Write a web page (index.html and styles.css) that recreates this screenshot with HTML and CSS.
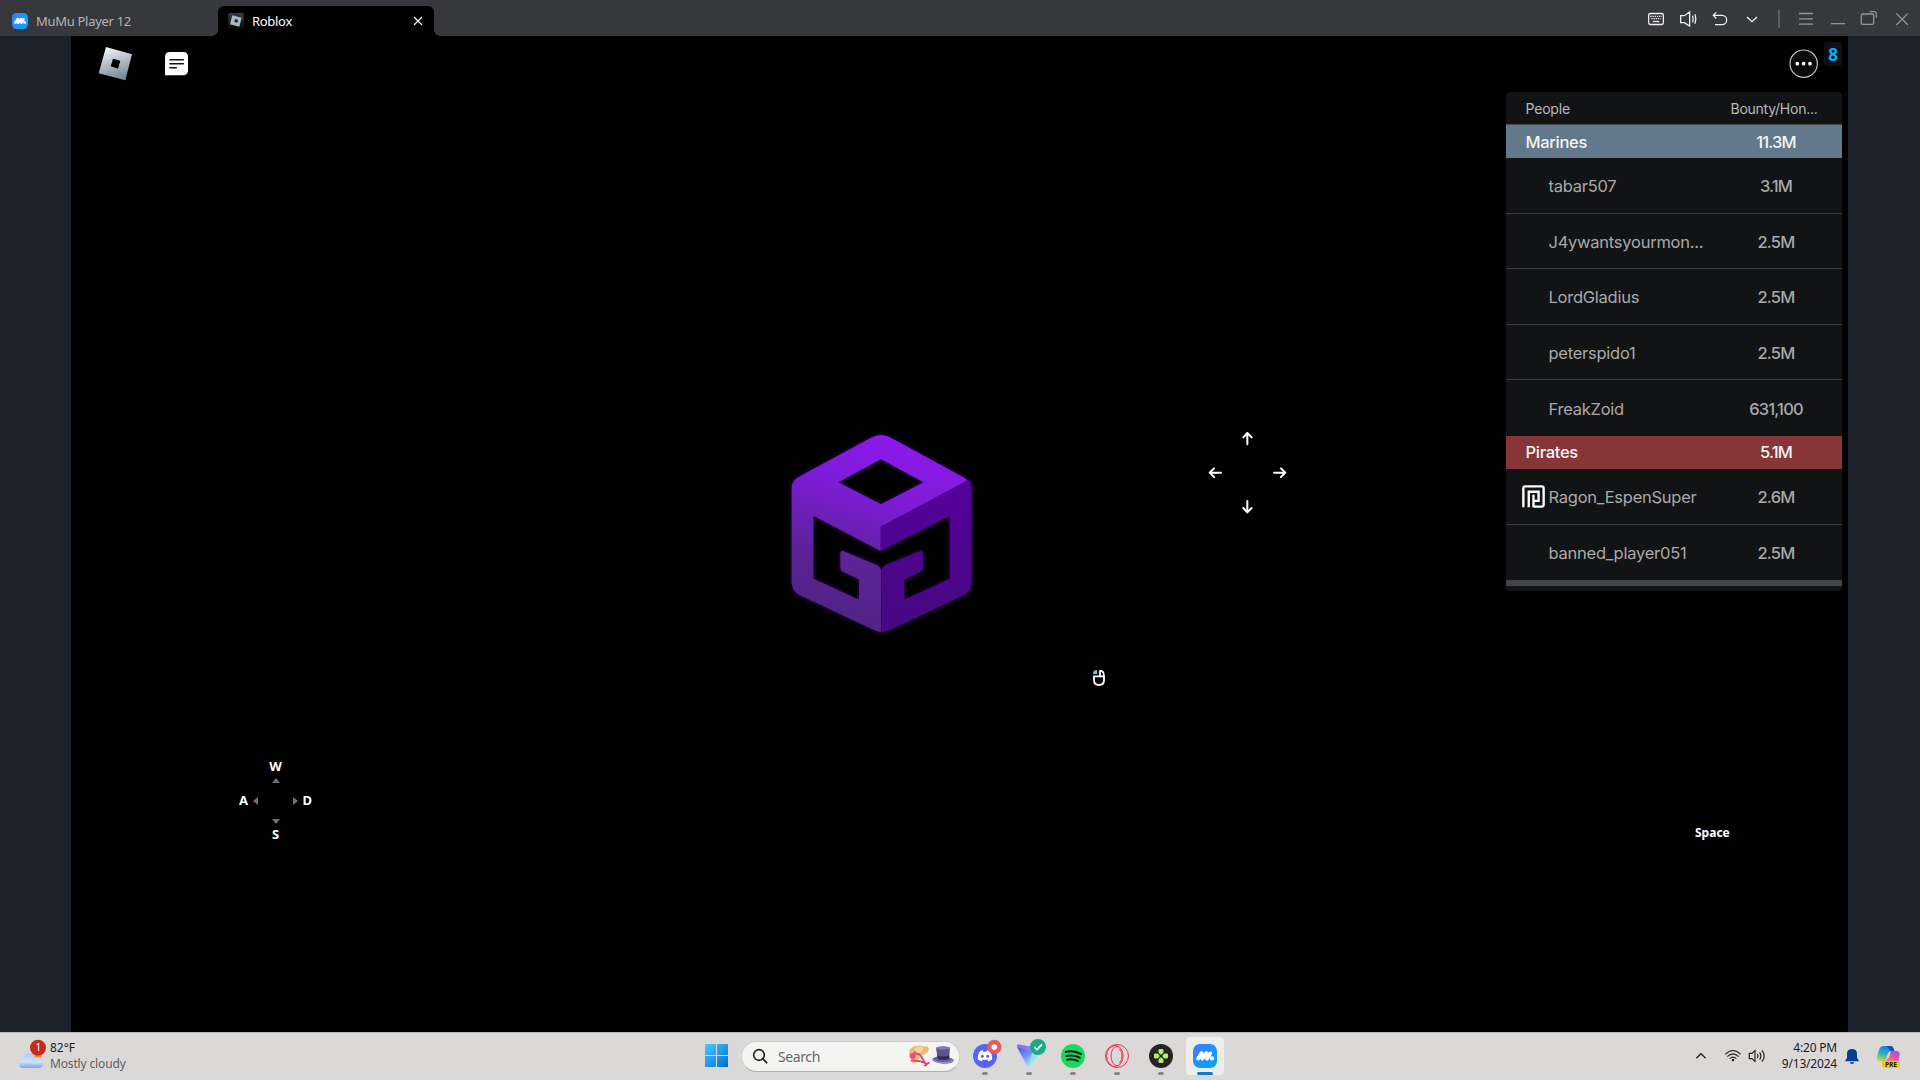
FILE: index.html
```html
<!DOCTYPE html>
<html lang="en">
<head>
    <meta charset="UTF-8">
    <meta name="viewport" content="width=device-width, initial-scale=1.0">
    <title>MuMu Player 12</title>
    <link rel="stylesheet" href="styles.css">
</head>
<body>
    <div class="titlebar">
        <div class="home-tab">
            <svg class="tab-icon" viewBox="0 0 72 72">
                <defs>
                    <linearGradient id="mumu" x1="0" y1="0" x2="1" y2="1">
                        <stop offset="0" stop-color="#3d7bff"/>
                        <stop offset="1" stop-color="#00a8ff"/>
                    </linearGradient>
                </defs>
                <rect width="72" height="72" rx="21" fill="url(#mumu)"/>
                <path d="M15 44 L26 27 M28 44 L40 27 M42 44 L52 28" stroke="#fff" stroke-width="11" stroke-linecap="round" fill="none"/>
                <circle cx="57" cy="43" r="6.5" fill="#fff"/>
            </svg>
            <span>MuMu Player 12</span>
        </div>
        <div class="active-tab">
            <svg class="tab-icon" viewBox="0 0 48 48">
                <defs>
                    <linearGradient id="tile" x1="0" y1="0" x2="0" y2="1">
                        <stop offset="0" stop-color="#343a46"/>
                        <stop offset="1" stop-color="#07080a"/>
                    </linearGradient>
                </defs>
                <rect width="48" height="48" rx="5" fill="url(#tile)"/>
                <path d="M13 7 L41 14 L34 41 L6 34 Z" fill="#aab6c6"/>
                <path d="M21 18 L30 20 L28 29 L19 27 Z" fill="#20252e"/>
            </svg>
            <span class="tab-name">Roblox</span>
            <svg class="tab-close" viewBox="0 0 30 30"><path d="M3 3 L27 27 M27 3 L3 27" stroke="#fff" stroke-width="3.4"/></svg>
        </div>
        <div class="window-tools">
            <svg viewBox="78 27 60 60">
                <rect x="86" y="40.500" width="44" height="33" rx="5"/>
                <path d="M91 49 H125 M94 56 H122" stroke-dasharray="4 2.500"/>
                <path d="M98 64.500 H118"/>
            </svg>
            <svg viewBox="174 27 60 60">
                <path d="M209 36 V78 L193 68 H182 V47 H193 Z M218 47 Q221 57 218 67 M225 43 Q230 57 225 71"/>
            </svg>
            <svg viewBox="270 27 60 60">
                <path d="M289 37 L280 46 L289 56 M281 46 H306 A14 14 0 0 1 306 74 H285"/>
            </svg>
            <svg viewBox="366 27 60 60"><path d="M381 51 L396 65 L411 51"/></svg>
            <span class="divider"></span>
            <svg class="dim" viewBox="528 27 60 60"><path d="M537 40.500 H579 M537 56.500 H579 M537 72.500 H579"/></svg>
            <svg class="dim" viewBox="624 27 60 60"><path d="M633 71 H675"/></svg>
            <svg class="dim" viewBox="720 27 60 60">
                <rect x="724" y="42" width="37" height="31" rx="4"/>
                <path d="M749 35 H763 Q769 35 769 41 V53"/>
            </svg>
            <svg class="dim" viewBox="816 27 60 60"><path d="M829 40 L864 75 M864 40 L829 75"/></svg>
        </div>
    </div>

    <div class="stage">
        <div class="game">
            <svg class="roblox-logo" viewBox="294 138 108 108">
                <defs>
                    <linearGradient id="steel" x1="0" y1="0" x2="0.300" y2="1">
                        <stop offset="0" stop-color="#ffffff"/>
                        <stop offset="0.450" stop-color="#c3cad2"/>
                        <stop offset="1" stop-color="#7d8c9b"/>
                    </linearGradient>
                </defs>
                <path fill-rule="evenodd" fill="url(#steel)" d="M318 141 L396 163 L376 241 L296 220 Z M339 176 L361 182 L354 206 L332 199 Z"/>
            </svg>
            <svg class="chat-icon" viewBox="492 153 75 75">
                <path d="M510 156 H549 Q564 156 564 171 V211 Q564 226 549 226 H495 V171 Q495 156 510 156 Z" fill="#fff"/>
                <path d="M510 179 H550 M510 191 H550 M510 203 H529" stroke="#111" stroke-width="4.500" stroke-linecap="round"/>
            </svg>
            <svg class="more-icon" viewBox="0 0 90 90">
                <circle cx="44" cy="44" r="41" fill="#0b0b0c" stroke="#c4c4c4" stroke-width="3.500"/>
                <circle cx="25" cy="44" r="5.500" fill="#fff"/>
                <circle cx="44" cy="44" r="5.500" fill="#fff"/>
                <circle cx="63" cy="44" r="5.500" fill="#fff"/>
            </svg>
            <div class="fps">8</div>

            <div class="leaderboard">
                <div class="row head"><span class="name">People</span><span class="value">Bounty/Hon...</span></div>
                <div class="row team marines"><span class="name">Marines</span><span class="value">11.3M</span></div>
                <div class="row player"><span class="name">tabar507</span><span class="value">3.1M</span></div>
                <div class="row player"><span class="name">J4ywantsyourmon...</span><span class="value">2.5M</span></div>
                <div class="row player"><span class="name">LordGladius</span><span class="value">2.5M</span></div>
                <div class="row player"><span class="name">peterspido1</span><span class="value">2.5M</span></div>
                <div class="row player last"><span class="name">FreakZoid</span><span class="value">631,100</span></div>
                <div class="row team pirates"><span class="name">Pirates</span><span class="value">5.1M</span></div>
                <div class="row player">
                    <svg class="badge" viewBox="0 0 68 68">
                        <path d="M4 66 V10 Q4 4 10 4 H58 Q64 4 64 10 V58 Q64 64 58 64 H34" fill="none" stroke="#fff" stroke-width="7"/>
                        <path d="M20 66 V20 H49 V47 H34 M34 29 V66" fill="none" stroke="#fff" stroke-width="7"/>
                    </svg>
                    <span class="name">Ragon_EspenSuper</span><span class="value">2.6M</span>
                </div>
                <div class="row player last"><span class="name">banned_player051</span><span class="value">2.5M</span></div>
                <div class="scrollbar"></div>
            </div>

            <svg class="cube" viewBox="0 0 660 690">
                <defs>
                    <linearGradient id="cubeLeft" x1="0.700" y1="0" x2="0.400" y2="1">
                        <stop offset="0" stop-color="#8f18ee"/>
                        <stop offset="0.350" stop-color="#7d1cd6"/>
                        <stop offset="0.700" stop-color="#5d2299"/>
                        <stop offset="1" stop-color="#4f2482"/>
                    </linearGradient>
                    <linearGradient id="cubeRight" x1="0" y1="0" x2="0" y2="1">
                        <stop offset="0" stop-color="#55009b"/>
                        <stop offset="1" stop-color="#460a80"/>
                    </linearGradient>
                </defs>
                <path fill-rule="evenodd" fill="url(#cubeLeft)" d="M303 53 Q333 37 363 53 L580 172 Q590 178 594 182 L332 320 V393 L130 287 V476 L267 539 V478 L222 457 Q211 452 211 440 V400 Q211 390 221 394 L318 434 Q333 441 333 454 V636 Q325 636 312 630 L90 526 Q65 514 65 486 V204 Q65 181 87 170 Z M333 118 L205 187 L333 253 L461 187 Z"/>
                <path fill="url(#cubeRight)" d="M594 180 Q605 188 605 204 V486 Q605 514 580 526 L360 630 Q347 636 336 636 V454 Q336 441 350 434 L449 394 Q459 390 459 400 V440 Q459 452 448 457 L403 478 V539 L540 476 V287 L332 393 V320 Z"/>
            </svg>

            <svg class="look-keys" viewBox="408 24 252 264">
                <g fill="none" stroke="#fff" stroke-width="6" stroke-linecap="round" stroke-linejoin="round">
                    <path d="M532 73 V40 M520 52 L532 39 L545 52"/>
                    <path d="M532 243 V276 M520 264 L532 277 L545 264"/>
                    <path d="M453 158 H420 M432 145 L419 158 L432 171"/>
                    <path d="M612 158 H645 M633 145 L646 158 L633 171"/>
                </g>
            </svg>
            <svg class="mouse-icon" viewBox="66 747 42 54">
                <path d="M90 752 Q102 752 102 769 V780 Q102 795 87 795 Q72 795 72 780 V769 H102 M90 751 V769" fill="none" stroke="#fff" stroke-width="5.500"/>
                <path d="M69 762 Q69 750 81 750 V762 Z" fill="#5fcdf5"/>
            </svg>

            <div class="move-keys">
                <span>W</span>
                <i class="up"></i>
                <div class="middle"><span>A</span><i class="left"></i><i class="right"></i><span>D</span></div>
                <i class="down"></i>
                <span>S</span>
            </div>
            <div class="space-key">Space</div>
        </div>
    </div>

    <div class="taskbar">
        <div class="weather">
            <svg viewBox="54 48 90 96">
                <defs>
                    <linearGradient id="cloud" x1="0" y1="0" x2="0" y2="1">
                        <stop offset="0" stop-color="#a9c8f5"/>
                        <stop offset="0.600" stop-color="#cfe0fb"/>
                        <stop offset="1" stop-color="#7da4e6"/>
                    </linearGradient>
                </defs>
                <circle cx="111" cy="98" r="15" fill="#f58a1f"/>
                <path d="M72 138 Q57 138 57 125 Q57 112 70 111 Q72 93 88 93 Q101 93 105 106 Q129 104 130 122 Q130 138 114 138 Z" fill="url(#cloud)"/>
                <circle cx="114" cy="77" r="24" fill="#c42b1c"/>
                <text x="115" y="88" text-anchor="middle" class="alert-count">1</text>
            </svg>
            <div class="weather-text">
                <div>82°F</div>
                <div class="sub">Mostly cloudy</div>
            </div>
        </div>

        <svg class="start" viewBox="0 0 72 72">
            <defs>
                <linearGradient id="win" gradientUnits="userSpaceOnUse" x1="0" y1="0" x2="70" y2="70">
                    <stop offset="0" stop-color="#4ccbff"/>
                    <stop offset="1" stop-color="#0069cc"/>
                </linearGradient>
            </defs>
            <path d="M0 0 H33 V33 H0 Z M36 0 H69 V33 H36 Z M0 36 H33 V69 H0 Z M36 36 H69 V69 H36 Z" fill="url(#win)"/>
        </svg>

        <div class="search">
            <svg class="lens" viewBox="186 84 48 48">
                <circle cx="207" cy="105" r="16" fill="none" stroke="#222" stroke-width="5"/>
                <path d="M218 116 L230 128" stroke="#222" stroke-width="5.500" stroke-linecap="round"/>
            </svg>
            <span>Search</span>
            <svg class="hats" viewBox="654 72 144 72">
                <path d="M661 103 Q658 85 676 79 Q696 74 707 80 Q720 76 719 90 Q715 104 698 105 L681 129 Q666 132 669 116 Z" fill="#eab974"/>
                <path d="M675 88 Q684 75 702 80 Q705 91 694 98 L681 108 Z" fill="#f6d6a0"/>
                <path d="M676 94 Q681 105 694 102 M694 105 L713 137 M665 122 Q690 119 716 132 M706 138 L721 127" stroke="#dd4668" stroke-width="5.500" fill="none"/>
                <circle cx="671" cy="108" r="9" fill="#e35472"/>
                <ellipse cx="762" cy="120" rx="32" ry="11" fill="#6e5e9f" transform="rotate(4 762 120)"/>
                <path d="M741 84 Q762 75 783 84 L780 116 Q762 124 746 116 Z" fill="#62528f"/>
                <ellipse cx="762" cy="84" rx="21" ry="5" fill="#8377ae"/>
                <path d="M745 106 Q762 113 781 106 V116 Q762 124 746 116 Z" fill="#352b59"/>
                <path d="M731 116 Q742 130 762 128 Q784 129 794 118" stroke="#a79bd0" stroke-width="3" fill="none"/>
            </svg>
        </div>

        <div class="apps">
            <div class="app">
                <svg viewBox="21 54 108 108">
                    <circle cx="75" cy="108" r="36" fill="#5865f2"/>
                    <path d="M60 93 L68 91 L71 95 H79 L82 91 L90 93 Q98 106 97 118 Q91 123 85 124 L82 119 H68 L65 124 Q58 123 53 118 Q52 105 60 93 Z" fill="#fff"/>
                    <circle cx="67" cy="109" r="4.500" fill="#5865f2"/>
                    <circle cx="83" cy="109" r="4.500" fill="#5865f2"/>
                    <circle cx="103" cy="81" r="21" fill="#f0595b" stroke="#8f7377" stroke-width="1"/>
                    <circle cx="103" cy="81" r="8.500" fill="#fff"/>
                </svg>
            </div>
            <div class="app">
                <svg viewBox="153 54 108 108">
                    <defs>
                        <linearGradient id="vpn" x1="0" y1="0" x2="0.600" y2="1">
                            <stop offset="0" stop-color="#5b3fe0"/>
                            <stop offset="0.500" stop-color="#6e8cf5"/>
                            <stop offset="1" stop-color="#9ff5ee"/>
                        </linearGradient>
                    </defs>
                    <path d="M171 77 Q171 73 179 74 L237 84 Q243 86 240 92 L213 138 Q207 146 201 138 L173 85 Z" fill="url(#vpn)"/>
                    <path d="M217 94 L240 92 L213 138 Q208 144 204 140 Z" fill="#9ff0f0" opacity="0.700"/>
                    <path d="M171 77 Q171 73 179 74 L237 84 L214 93 L176 83 Z" fill="#9a8cf0" opacity="0.600"/>
                    <circle cx="234" cy="81" r="24" fill="#1ea885"/>
                    <path d="M223 81 L231 89 L246 73" stroke="#fff" stroke-width="5" fill="none"/>
                </svg>
            </div>
            <div class="app">
                <svg viewBox="285 54 108 108">
                    <circle cx="339" cy="108" r="36" fill="#1ed760"/>
                    <path d="M317 96 Q341 90 363 102 M319 108 Q341 103 359 113 M321 119 Q340 115 354 123" stroke="#0c1a10" stroke-width="6" stroke-linecap="round" fill="none"/>
                </svg>
            </div>
            <div class="app">
                <svg viewBox="417 54 108 108">
                    <g fill="none" stroke="#fa2d55" stroke-width="3">
                        <circle cx="471" cy="108" r="34.500"/>
                        <ellipse cx="471" cy="108" rx="18" ry="29"/>
                        <path d="M475 74 Q440 78 440 108 Q440 139 475 142 M478 86 Q495 108 478 130"/>
                    </g>
                </svg>
            </div>
            <div class="app">
                <svg viewBox="549 54 108 108">
                    <circle cx="603" cy="108" r="36" fill="#242424"/>
                    <path d="M597 89 H609 V98 L603 103 L597 98 Z M597 127 H609 V118 L603 113 L597 118 Z M584 102 H593 L598 108 L593 114 H584 Z M622 102 H613 L608 108 L613 114 H622 Z" fill="#b6f36b" stroke="#b6f36b" stroke-width="3" stroke-linejoin="round"/>
                </svg>
            </div>
            <div class="app active">
                <svg viewBox="-18 -18 108 108">
                    <rect width="72" height="72" rx="21" fill="url(#mumu)"/>
                    <path d="M15 44 L26 27 M28 44 L40 27 M42 44 L52 28" stroke="#fff" stroke-width="11" stroke-linecap="round" fill="none"/>
                    <circle cx="57" cy="43" r="6.500" fill="#fff"/>
                </svg>
            </div>
        </div>

        <div class="tray">
            <svg class="chevron" viewBox="75 90 36 36"><path d="M79 115 L93 101 L107 115" fill="none" stroke="#222" stroke-width="4"/></svg>
            <svg class="wifi" viewBox="162 81 54 54">
                <path d="M166 103 Q189 80 212 103 M172 110 Q189 93 206 110 M179 116 Q189 107 199 116" fill="none" stroke="#222" stroke-width="3.200"/>
                <circle cx="189" cy="120" r="4" fill="#222"/>
            </svg>
            <svg class="sound" viewBox="234 81 54 54">
                <path d="M255 92 V124 L246 116 H238 V100 H246 Z M262 102 Q266 108 262 114 M269 97 Q276 108 269 119 M276 91 Q289 108 276 125" fill="none" stroke="#222" stroke-width="3.500"/>
            </svg>
            <div class="clock">
                <div>4:20 PM</div>
                <div>9/13/2024</div>
            </div>
            <svg class="bell" viewBox="525 84 42 51">
                <path d="M546 87 Q561 87 561 102 V114 L566 121 V124 H526 V121 L531 114 V102 Q531 87 546 87 Z M539 127 H553 Q552 132 546 132 Q540 132 539 127 Z" fill="#003e92"/>
            </svg>
            <svg class="copilot" viewBox="618 72 75 75">
                <defs>
                    <linearGradient id="cpLeft" x1="0.500" y1="0" x2="0.200" y2="1">
                        <stop offset="0" stop-color="#1a7ee0"/>
                        <stop offset="0.500" stop-color="#28b5b8"/>
                        <stop offset="1" stop-color="#d5d93a"/>
                    </linearGradient>
                    <linearGradient id="cpRight" x1="0.700" y1="0" x2="0.300" y2="1">
                        <stop offset="0" stop-color="#9a52e8"/>
                        <stop offset="0.600" stop-color="#e8579c"/>
                        <stop offset="1" stop-color="#f98c55"/>
                    </linearGradient>
                </defs>
                <path d="M641 78 H662 Q669 78 671 86 L673 93 H663 Q656 93 653 101 L646 124 H630 Q619 124 621 111 L627 90 Q630 78 641 78 Z" fill="url(#cpLeft)"/>
                <path d="M663 93 H680 Q691 94 689 106 L685 125 H646 L651 117 Q656 116 658 108 Z" fill="url(#cpRight)"/>
                <path d="M651 78 H662 Q669 78 671 86 L673 93 H660 Z" fill="#154fbd"/>
                <rect x="636" y="123" width="54" height="21" rx="5" fill="#ffc40c"/>
                <text x="663" y="140.500" text-anchor="middle" class="pre">PRE</text>
            </svg>
        </div>
    </div>
</body>
</html>
```

FILE: styles.css
```css
body {
    margin: 0;
    width: 1920px;
    height: 1080px;
    overflow: hidden;
    display: flex;
    flex-direction: column;
    background: #000;
    font-family: "Noto Sans", "Open Sans", sans-serif;
}

svg {
    display: block;
    flex-shrink: 0;
}

/* Title bar */
.titlebar {
    display: flex;
    align-items: flex-end;
    height: 36px;
    background: #37383d;
}

.home-tab {
    display: flex;
    align-items: center;
    width: 206px;
    height: 30px;
    padding-left: 12px;
    color: #b4b5b8;
    font-size: 13px;
}

.home-tab span {
    margin-left: 8px;
    letter-spacing: -0.3px;
}

.tab-icon {
    width: 16px;
    height: 16px;
}

.active-tab {
    position: relative;
    display: flex;
    align-items: center;
    box-sizing: border-box;
    width: 216px;
    height: 30px;
    padding: 0 11px 0 10px;
    border-radius: 6px 6px 0 0;
    background: #000;
    color: #fff;
    font-size: 13px;
}

.active-tab::before,
.active-tab::after {
    content: "";
    position: absolute;
    bottom: 0;
    width: 6px;
    height: 6px;
}

.active-tab::before {
    left: -6px;
    background: radial-gradient(circle at 0 0, transparent 5.5px, #000 6px);
}

.active-tab::after {
    right: -6px;
    background: radial-gradient(circle at 100% 0, transparent 5.5px, #000 6px);
}

.tab-name {
    flex: 1;
    margin-left: 8px;
    letter-spacing: -0.3px;
}

.tab-close {
    width: 10px;
    height: 10px;
}

.window-tools {
    display: flex;
    align-items: center;
    gap: 12px;
    height: 20px;
    margin-left: auto;
    padding: 0 8px 7px 0;
}

.window-tools svg {
    width: 20px;
    height: 20px;
    fill: none;
    stroke: #f2f2f2;
    stroke-width: 3.8;
}

.window-tools svg.dim {
    stroke: #8f98a8;
}

.divider {
    width: 2px;
    height: 18px;
    margin: 0 4px;
    background: #5c5d61;
}

/* Emulator screen */
.stage {
    flex: 1;
    padding: 0 72px 0 71px;
    background: #1d2129;
}

.game {
    position: relative;
    height: 996px;
    background: #000;
}

.roblox-logo {
    position: absolute;
    left: 27px;
    top: 10px;
    width: 36px;
    height: 36px;
}

.chat-icon {
    position: absolute;
    left: 93px;
    top: 15px;
    width: 25px;
    height: 25px;
}

.more-icon {
    position: absolute;
    left: 1718px;
    top: 13px;
    width: 30px;
    height: 30px;
}

.fps {
    position: absolute;
    left: 1753px;
    top: 6px;
    width: 18px;
    height: 24px;
    border-radius: 3px;
    background: #0e1016;
    color: #00b4ff;
    font-size: 17px;
    font-weight: bold;
    line-height: 25px;
    text-align: center;
}

.leaderboard {
    position: absolute;
    left: 1434.5px;
    top: 56px;
    width: 336px;
    height: 499px;
    border-radius: 4px;
    overflow: hidden;
    background: #121315;
    font-family: Inter, sans-serif;
}

.row {
    display: flex;
    align-items: center;
    box-sizing: border-box;
    padding-left: 20px;
}

.row .name {
    flex: 1;
    white-space: nowrap;
}

.row .value {
    width: 131px;
    text-align: center;
}

.row.head {
    height: 33px;
    border-bottom: 1px solid #4a4541;
    color: #b9b9ba;
    font-size: 14px;
    letter-spacing: -0.2px;
}

.row.head .value {
    width: 135px;
    padding-right: 0;
    letter-spacing: -0.25px;
}

.row.team {
    height: 33px;
    color: #f4f6f7;
    font-size: 16.5px;
    font-weight: 500;
    letter-spacing: -0.3px;
}

.row.team .value {
    letter-spacing: -0.8px;
}

.row.marines {
    background: #62788b;
}

.row.pirates {
    background: #883537;
}

.row.player {
    position: relative;
    height: 55.6px;
    padding: 2px 0 0 43px;
    border-bottom: 1px solid #3a3b3d;
    color: #a9a9aa;
    font-size: 16.5px;
    letter-spacing: -0.25px;
}

.row.player.last {
    border-bottom: none;
}

.row.player .value {
    font-weight: 500;
    letter-spacing: -0.8px;
}

.badge {
    position: absolute;
    left: 16px;
    top: 16.5px;
    width: 23px;
    height: 23px;
}

.scrollbar {
    height: 6px;
    background: #434446;
}

.cube {
    position: absolute;
    left: 699px;
    top: 384px;
    width: 220px;
    height: 230px;
    filter: drop-shadow(0 0 2px #3a0a66);
}

/* Key mapping hints */
.look-keys {
    position: absolute;
    left: 1135px;
    top: 392px;
    width: 84px;
    height: 88px;
}

.mouse-icon {
    position: absolute;
    left: 1021px;
    top: 633px;
    width: 14px;
    height: 18px;
}

.move-keys {
    position: absolute;
    left: 168px;
    top: 722px;
    display: flex;
    flex-direction: column;
    align-items: center;
    width: 73px;
    color: #fff;
    font-size: 13px;
    font-weight: bold;
    line-height: 17px;
}

.move-keys .middle {
    display: flex;
    align-items: center;
    width: 100%;
    margin: 9px 0;
}

.move-keys i {
    border: 4px solid transparent;
}

.move-keys .up {
    margin-top: 3px;
    border-top: none;
    border-bottom: 5px solid #6d7177;
}

.move-keys .down {
    margin: 1px 0 2px;
    border-bottom: none;
    border-top: 5px solid #6d7177;
}

.move-keys .left {
    margin-left: 5px;
    border-left: none;
    border-right: 5px solid #6d7177;
}

.move-keys .right {
    margin: 0 4px 0 auto;
    border-right: none;
    border-left: 5px solid #6d7177;
}

.space-key {
    position: absolute;
    left: 1624px;
    top: 788px;
    color: #fff;
    font-size: 12px;
    font-weight: bold;
    line-height: 17px;
}

/* Taskbar */
.taskbar {
    display: flex;
    align-items: center;
    box-sizing: border-box;
    height: 48px;
    padding-bottom: 1px;
    border-top: 1px solid #b9b8b4;
    background: #dad9d8;
}

.weather {
    display: flex;
    align-items: center;
    box-sizing: border-box;
    width: 705px;
    padding-left: 18px;
}

.weather svg {
    width: 30px;
    height: 32px;
    margin-top: -5px;
}

.alert-count {
    fill: #fff;
    font-size: 30px;
}

.weather-text {
    margin-left: 2px;
    color: #1b1b1b;
    font-size: 12px;
    line-height: 16px;
}

.weather-text .sub {
    color: #5d5d5d;
    letter-spacing: -0.15px;
}

.start {
    width: 24px;
    height: 24px;
}

.search {
    display: flex;
    align-items: center;
    box-sizing: border-box;
    width: 219px;
    height: 31px;
    margin: 0 3px 0 12px;
    padding: 0 4px 0 10px;
    border: 1px solid #cfcfcf;
    border-bottom-color: #aeaeae;
    border-radius: 16px;
    background: #f4f4f3;
    color: #666;
    font-size: 14px;
}

.search span {
    flex: 1;
    margin-left: 10px;
    letter-spacing: -0.4px;
}

.lens {
    width: 16px;
    height: 16px;
}

.hats {
    width: 48px;
    height: 24px;
}

.apps {
    display: flex;
}

.app {
    position: relative;
    display: flex;
    align-items: center;
    justify-content: center;
    width: 38px;
    height: 38px;
    margin: 0 3px;
    border-radius: 4px;
}

.app svg {
    width: 36px;
    height: 36px;
}

.app::after {
    content: "";
    position: absolute;
    left: 16px;
    bottom: 0;
    width: 6px;
    height: 3px;
    border-radius: 2px;
    background: #858585;
}

.app.active {
    background: #ededec;
}

.app.active::after {
    left: 11px;
    width: 16px;
    background: #0a78d4;
}

.tray {
    display: flex;
    align-items: center;
    margin-left: auto;
    padding-right: 19px;
}

.chevron {
    width: 12px;
    height: 12px;
    margin-right: 17px;
}

.wifi,
.sound {
    width: 18px;
    height: 18px;
}

.wifi {
    margin-right: 6px;
}

.clock {
    width: 71px;
    color: #1b1b1b;
    font-size: 12px;
    line-height: 16px;
    letter-spacing: -0.2px;
    text-align: right;
}

.bell {
    width: 14px;
    height: 17px;
    margin: 0 17px 0 8px;
}

.copilot {
    width: 25px;
    height: 25px;
}

.pre {
    fill: #222;
    font-size: 20px;
    font-weight: bold;
}
```
